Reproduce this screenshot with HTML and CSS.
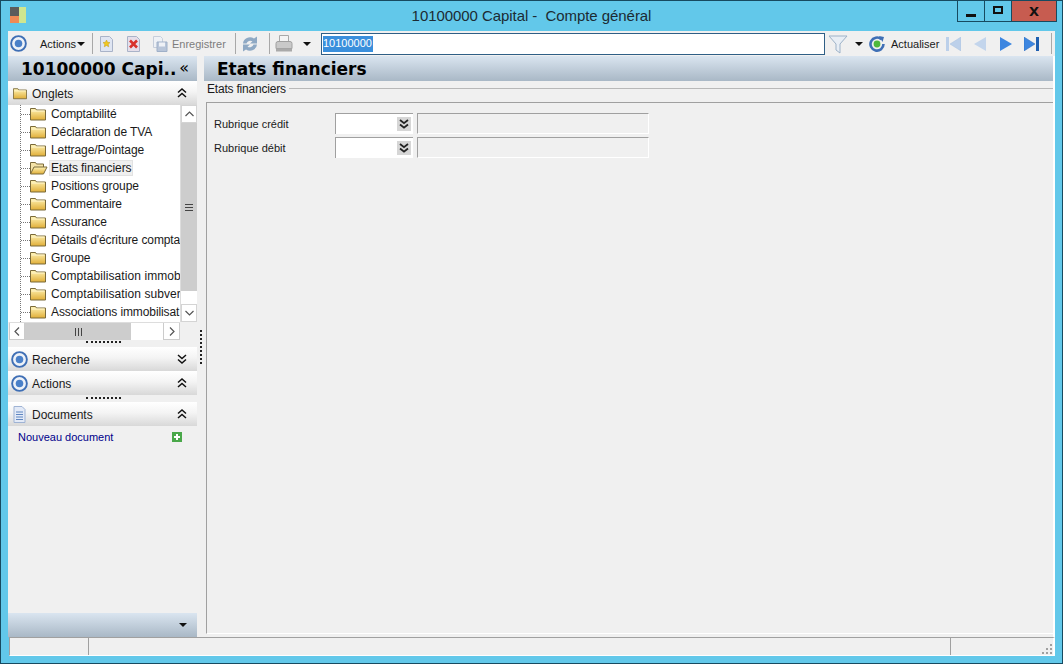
FILE: index.html
```html
<!DOCTYPE html>
<html lang="fr">
<head>
<meta charset="utf-8">
<title>10100000 Capital - Compte général</title>
<link rel="stylesheet" href="styles.css">
</head>
<body>
<svg class="defs" width="0" height="0">
  <defs>
    <linearGradient id="fold" x1="0" y1="0" x2="0" y2="1"><stop offset="0" stop-color="#fff3b4"/><stop offset="1" stop-color="#e0ae38"/></linearGradient>
    <symbol id="target" viewBox="0 0 18 18"><circle cx="9" cy="9" r="7.8" fill="#eef2f8" stroke="#3f6fb5" stroke-width="2"/><circle cx="9" cy="9" r="4" fill="#4a80c8"/></symbol>
    <symbol id="folder" viewBox="0 0 16 14"><path d="M.5 3V1.500h5l1 1.500h9v10H.5z" fill="url(#fold)" stroke="#7a6a3a"/><path d="M1.500 4h13" stroke="#fff6cf"/></symbol>
    <symbol id="folder-open" viewBox="0 0 18 14"><path d="M.5 13V1.500h5l1 1.500h7v3" fill="#f4e3a8" stroke="#7a6a3a"/><path d="M.5 13l3.500-7h13l-3.500 7z" fill="url(#fold)" stroke="#7a6a3a"/></symbol>
    <symbol id="dbl-up" viewBox="0 0 10 10"><path d="M1 4.500l4-3.500 4 3.500M1 9l4-3.500L9 9" fill="none" stroke="#111" stroke-width="1.500"/></symbol>
    <symbol id="dbl-down" viewBox="0 0 10 10"><path d="M1 1l4 3.500L9 1M1 5.500L5 9l4-3.500" fill="none" stroke="#111" stroke-width="1.500"/></symbol>
    <symbol id="dropdown" viewBox="0 0 14 14"><rect width="14" height="14" fill="#d6d6d6"/><path d="M3 3l4 3.200L11 3M3 7.500l4 3.200 4-3.200" fill="none" stroke="#222" stroke-width="1.800"/></symbol>
    <symbol id="arrow-half" viewBox="0 0 16 16"><path d="M1 7.500A7 6.500 0 0 1 12 2.500L15 .5v7H8l2.500-2.200A4 4 0 0 0 4.500 7.500z" fill="#8fa9c4"/></symbol>
  </defs>
</svg>
<div class="window">
  <header class="titlebar">
    <div class="app-logo"><i class="lg-grey"></i><i class="lg-green"></i><i class="lg-orange"></i></div>
    <div class="title">10100000 Capital -&nbsp; Compte général</div>
    <div class="winbtns">
      <div class="winbtn win-min"><span class="min-glyph"></span></div>
      <div class="winbtn win-max"><span class="max-glyph"></span></div>
      <div class="winbtn win-close">X</div>
    </div>
  </header>

  <div class="toolbar">
    <svg class="ic18 t-target"><use href="#target"/></svg>
    <span class="t-actions">Actions</span><span class="caret c-actions"></span>
    <span class="tsep s1"></span>
    <svg class="t-new" width="15" height="16" viewBox="0 0 15 16"><path d="M1.500.5h9l3 3v12h-12z" fill="#dfe5f2" stroke="#a9b3c8"/><path d="M7.500 4l1.100 2.300 2.400.3-1.800 1.700.5 2.500-2.200-1.300-2.200 1.300.5-2.500L4 6.600l2.400-.3z" fill="#f2c81e" stroke="#c29a14" stroke-width=".5"/></svg>
    <svg class="t-del" width="15" height="16" viewBox="0 0 15 16"><path d="M1.500.5h9l3 3v12h-12z" fill="#e6dfea" stroke="#a9b3c8"/><path d="M4 4.500l7 7M11 4.500l-7 7" stroke="#d8322c" stroke-width="2.600"/></svg>
    <svg class="t-save" width="16" height="16" viewBox="0 0 16 16"><path d="M1.500.5h7l2 2v9h-9z" fill="#eef1f6" stroke="#c6cedb"/><path d="M5 6h10v9.500H5z" fill="#b8c5d9" stroke="#9fb0c8"/><path d="M7 6.500h6v4H7z" fill="#eef1f6"/></svg>
    <span class="t-save-label">Enregistrer</span>
    <span class="tsep s2"></span>
    <svg class="t-refresh" width="16" height="16" viewBox="0 0 16 16"><use href="#arrow-half" width="16" height="16"/><use href="#arrow-half" width="16" height="16" transform="rotate(180 8 8)"/></svg>
    <span class="tsep s3"></span>
    <svg class="t-print" width="18" height="18" viewBox="0 0 18 18"><path d="M4.500.5h9v7h-9z" fill="#f4f4f4" stroke="#a8a8a8"/><path d="M1 8.500q0-2 2-2h12q2 0 2 2v5H1z" fill="#c9c9c9" stroke="#a0a0a0"/><path d="M1 13.500h16v3H1z" fill="#a9a9a9"/></svg>
    <span class="caret c-print"></span>
    <div class="t-input"><span class="t-selected">10100000</span></div>
    <svg class="t-filter" width="20" height="20" viewBox="0 0 20 20"><path d="M1 2h18l-7 8v9l-4-3v-6z" fill="#e8eef5" stroke="#9db2c8"/></svg>
    <span class="caret c-filter"></span>
    <svg class="t-update" width="16" height="16" viewBox="0 0 16 16"><path d="M14.500 8a6.500 6.500 0 1 1-2.200-4.800" fill="none" stroke="#3f6fb5" stroke-width="2.600"/><path d="M10 0l5 1-1.500 5z" fill="#3f6fb5"/><circle cx="8" cy="8" r="3.400" fill="#4fb83c"/></svg>
    <span class="t-update-label">Actualiser</span>
    <svg class="t-first" width="15" height="14" viewBox="0 0 15 14"><path d="M0 0h3v14H0z" fill="#bcd0ea"/><path d="M15 0v14L4 7z" fill="#bcd0ea" stroke="#a9c0de" stroke-width=".5"/></svg>
    <svg class="t-prev" width="12" height="14" viewBox="0 0 12 14"><path d="M12 0v14L0 7z" fill="#c3d5ec"/></svg>
    <svg class="t-next" width="12" height="14" viewBox="0 0 12 14"><path d="M0 0v14l12-7z" fill="#3d86e0"/></svg>
    <svg class="t-last" width="15" height="14" viewBox="0 0 15 14"><path d="M0 0v14l11-7z" fill="#3d86e0" stroke="#2a68b8" stroke-width=".5"/><path d="M12 0h3v14h-3z" fill="#1f5fb0"/></svg>
    <span class="tsep s4"></span>
  </div>

  <div class="main">
    <aside class="sidebar">
      <div class="heading side-heading"><span class="heading-text">10100000 Capi..</span><span class="collapse-glyph">«</span></div>

      <div class="panel-head head-onglets">
        <svg class="panel-icon" width="14" height="13"><use href="#folder"/></svg>
        <span class="panel-label">Onglets</span>
        <svg class="chev" width="10" height="10"><use href="#dbl-up"/></svg>
      </div>

      <div class="tree-box">
        <div class="tree-view">
          <ul class="tree">
            <li class="node"><span class="dots"></span><svg class="folder" width="16" height="14"><use href="#folder"/></svg><span class="lbl">Comptabilité</span></li>
            <li class="node"><span class="dots"></span><svg class="folder" width="16" height="14"><use href="#folder"/></svg><span class="lbl">Déclaration de TVA</span></li>
            <li class="node"><span class="dots"></span><svg class="folder" width="16" height="14"><use href="#folder"/></svg><span class="lbl">Lettrage/Pointage</span></li>
            <li class="node"><span class="dots"></span><svg class="folder open" width="18" height="14"><use href="#folder-open"/></svg><span class="lbl sel">Etats financiers</span></li>
            <li class="node"><span class="dots"></span><svg class="folder" width="16" height="14"><use href="#folder"/></svg><span class="lbl">Positions groupe</span></li>
            <li class="node"><span class="dots"></span><svg class="folder" width="16" height="14"><use href="#folder"/></svg><span class="lbl">Commentaire</span></li>
            <li class="node"><span class="dots"></span><svg class="folder" width="16" height="14"><use href="#folder"/></svg><span class="lbl">Assurance</span></li>
            <li class="node"><span class="dots"></span><svg class="folder" width="16" height="14"><use href="#folder"/></svg><span class="lbl">Détails d'écriture compta</span></li>
            <li class="node"><span class="dots"></span><svg class="folder" width="16" height="14"><use href="#folder"/></svg><span class="lbl">Groupe</span></li>
            <li class="node"><span class="dots"></span><svg class="folder" width="16" height="14"><use href="#folder"/></svg><span class="lbl wide">Comptabilisation immob</span></li>
            <li class="node"><span class="dots"></span><svg class="folder" width="16" height="14"><use href="#folder"/></svg><span class="lbl wide">Comptabilisation subver</span></li>
            <li class="node"><span class="dots"></span><svg class="folder" width="16" height="14"><use href="#folder"/></svg><span class="lbl">Associations immobilisat</span></li>
          </ul>
          <div class="vscroll">
            <div class="sb-btn sb-v"><svg width="9" height="6" viewBox="0 0 9 6"><path d="M.5 5l4-4 4 4" fill="none" stroke="#555" stroke-width="1.200"/></svg></div>
            <div class="vthumb"><span class="vgrip"></span></div>
            <div class="vtrack"></div>
            <div class="sb-btn sb-v"><svg width="9" height="6" viewBox="0 0 9 6"><path d="M.5 1l4 4 4-4" fill="none" stroke="#555" stroke-width="1.200"/></svg></div>
          </div>
        </div>
        <div class="hscroll">
          <div class="sb-btn sb-h"><svg width="6" height="9" viewBox="0 0 6 9"><path d="M5 .5l-4 4 4 4" fill="none" stroke="#555" stroke-width="1.200"/></svg></div>
          <div class="hthumb"><span class="hgrip"></span></div>
          <div class="htrack"></div>
          <div class="sb-btn sb-h sb-hend"><svg width="6" height="9" viewBox="0 0 6 9"><path d="M1 .5l4 4-4 4" fill="none" stroke="#555" stroke-width="1.200"/></svg></div>
        </div>
      </div>

      <div class="grip grip-a"></div>
      <div class="panel-head">
        <svg class="ic18" width="17" height="17"><use href="#target"/></svg>
        <span class="panel-label">Recherche</span>
        <svg class="chev" width="10" height="10"><use href="#dbl-down"/></svg>
      </div>
      <div class="panel-head">
        <svg class="ic18" width="17" height="17"><use href="#target"/></svg>
        <span class="panel-label">Actions</span>
        <svg class="chev" width="10" height="10"><use href="#dbl-up"/></svg>
      </div>
      <div class="grip grip-b"></div>
      <div class="panel-head">
        <svg class="ic18" width="16" height="17" viewBox="0 0 16 17"><path d="M2.500.5h8l3 3v13h-11z" fill="#e3eaf7" stroke="#9fb3d4"/><path d="M4.500 6h7M4.500 8.500h7M4.500 11h7M4.500 13.500h7" stroke="#5f86c0"/></svg>
        <span class="panel-label">Documents</span>
        <svg class="chev" width="10" height="10"><use href="#dbl-up"/></svg>
      </div>
      <div class="doc-row">
        <span class="doc-link">Nouveau document</span>
        <svg class="plus" width="10" height="10" viewBox="0 0 10 10"><rect width="10" height="10" fill="#4aa84a"/><path d="M5 2v6M2 5h6" stroke="#fff" stroke-width="2"/></svg>
      </div>
      <div class="side-foot"><span class="caret"></span></div>
    </aside>

    <div class="splitter"><span class="vdots"></span></div>

    <section class="content">
      <div class="heading main-heading"><span class="heading-text">Etats financiers</span></div>
      <div class="legend-row"><span class="legend">Etats financiers</span><span class="legend-line"></span></div>
      <div class="form-box">
        <div class="form-row">
          <span class="form-label">Rubrique crédit</span>
          <div class="combo"><svg width="14" height="14"><use href="#dropdown"/></svg></div>
          <div class="readonly"></div>
        </div>
        <div class="form-row">
          <span class="form-label">Rubrique débit</span>
          <div class="combo"><svg width="14" height="14"><use href="#dropdown"/></svg></div>
          <div class="readonly"></div>
        </div>
      </div>
    </section>
  </div>

  <footer class="statusbar">
    <div class="st st-a"></div>
    <div class="st st-b"></div>
    <div class="st st-c"><svg class="resize" width="12" height="12" viewBox="0 0 12 12"><path d="M9 1h2v2H9zM5 5h2v2H5zM9 5h2v2H9zM1 9h2v2H1zM5 9h2v2H5zM9 9h2v2H9z" fill="#a0a0a0"/></svg></div>
  </footer>
</div>
</body>
</html>
```
FILE: styles.css
```css
* { box-sizing: border-box; }
html, body { margin: 0; padding: 0; height: 100%; overflow: hidden; }
body { font-family: "Liberation Sans", Arial, sans-serif; font-size: 12px; color: #1a1a1a; }
.defs { display: block; height: 0; }
ul { list-style: none; margin: 0; padding: 0; }

.window { width: 1063px; height: 664px; display: flex; flex-direction: column; background: #62c8ea; border: 1px solid #174a60; padding: 0 7px 7px 7px; }

.titlebar { height: 30px; flex: none; display: grid; grid-template-columns: minmax(0, 1fr) auto minmax(0, 1fr); align-items: start; margin: 0 -7px; }
.app-logo { width: 16px; height: 16px; margin: 6px 0 0 9px; display: grid; grid-template-columns: 9px 7px; grid-template-rows: 9px 7px; }
.lg-grey { background: #5c5c5c; }
.lg-green { background: #cfe68f; grid-row: 1 / 3; grid-column: 2; }
.lg-orange { background: #f08a55; }
.title { font-size: 15px; color: #1c2b33; line-height: 30px; white-space: nowrap; letter-spacing: -.06px; }
.winbtns { justify-self: end; display: flex; height: 21px; margin-right: 5px; border: 1px solid #174a60; border-top: 0; }
.winbtn { display: flex; align-items: center; justify-content: center; border-left: 1px solid #174a60; }
.winbtn:first-child { border-left: 0; }
.win-min { width: 26px; }
.win-max { width: 27px; }
.win-close { width: 45px; background: #c75c50; font: bold 13px "DejaVu Sans", sans-serif; color: #111; }
.min-glyph { width: 10px; height: 3px; background: #111; margin-top: 8px; }
.max-glyph { width: 10px; height: 8px; border: 2px solid #111; margin-top: -2px; }

.toolbar { height: 25px; flex: none; display: flex; align-items: center; background: #f0f0f0; font-size: 11px; }
.toolbar svg { flex: none; }
.ic18 { flex: none; width: 17px; height: 17px; }
.t-target { margin-left: 2px; }
.t-actions { margin-left: 13px; width: 36px; white-space: nowrap; }
.caret { display: inline-block; flex: none; width: 0; height: 0; border-left: 4px solid transparent; border-right: 4px solid transparent; border-top: 4px solid #111; }
.c-actions { margin-left: 1px; }
.tsep { width: 1px; height: 21px; background: #a8a8a8; flex: none; }
.s1 { margin-left: 7px; }
.t-new { margin-left: 6px; }
.t-del { margin-left: 12px; }
.t-save { margin-left: 11px; }
.t-save-label { margin-left: 4px; width: 54px; color: #7d7d7d; white-space: nowrap; }
.s2 { margin-left: 9px; }
.t-refresh { margin-left: 6px; }
.s3 { margin-left: 11px; }
.t-print { margin-left: 5px; }
.c-print { margin-left: 10px; }
.t-input { margin-left: 10px; width: 504px; height: 22px; flex: none; background: #fff; border: 1px solid #2f5f86; padding: 2px 1px; line-height: 15px; }
.t-selected { display: inline-block; width: 50px; background: #3a8fdc; color: #fff; height: 16px; }
.t-filter { margin-left: 3px; }
.c-filter { margin-left: 7px; }
.t-update { margin-left: 6px; }
.t-update-label { margin-left: 6px; width: 47px; white-space: nowrap; }
.t-first { margin-left: 8px; }
.t-prev { margin-left: 13px; }
.t-next { margin-left: 14px; }
.t-last { margin-left: 12px; }
.s4 { margin-left: 12px; }

.main { flex: 1; min-height: 0; display: flex; background: #f0f0f0; }
.sidebar { width: 189px; flex: none; display: flex; flex-direction: column; }
.splitter { width: 7px; flex: none; }
.vdots { display: block; width: 0; height: 34px; margin: 274px 0 0 3px; border-left: 2px dotted #222; }
.content { flex: 1; min-width: 0; display: flex; flex-direction: column; padding-bottom: 3px; border-right: 2px solid #fff; }

.heading { height: 25px; flex: none; display: flex; align-items: center; background: linear-gradient(#dae5f0, #a9b8c6); font: bold 17px "DejaVu Sans", Verdana, sans-serif; color: #000; white-space: nowrap; }
.side-heading { padding-left: 13px; justify-content: space-between; }
.main-heading { padding-left: 13px; }
.collapse-glyph { font: normal 16px "DejaVu Sans", sans-serif; margin: -3px 8px 0 0; }

.panel-head { height: 24px; flex: none; display: flex; align-items: center; padding: 0 10px 0 3px; background: linear-gradient(#fff, #f4f4f4 45%, #d8d8d8); font-size: 12px; }
.panel-icon { margin-left: 2px; flex: none; }
.panel-label { flex: 1; margin: 1px 0 0 4px; }
.chev { flex: none; }
.head-onglets .panel-label { margin-left: 5px; }

.tree-box { height: 235px; flex: none; display: flex; flex-direction: column; }
.tree-view { height: 217px; flex: none; display: flex; background: #fff; }
.tree { flex: 1; min-width: 0; overflow: hidden; margin-left: 12px; border-left: 1px dotted #777; }
.node { height: 18px; display: flex; align-items: center; white-space: nowrap; overflow: hidden; }
.dots { width: 9px; flex: none; border-top: 1px dotted #777; }
.folder { flex: none; }
.folder.open { margin-right: -2px; }
.lbl { margin-left: 3px; padding: 1px 2px; font-size: 12px; letter-spacing: -.1px; }
.lbl.wide { letter-spacing: .08px; }
.lbl.sel { background: #efefef; border: 1px solid #e2e2e2; padding: 0 1px; }

.vscroll { width: 17px; flex: none; display: flex; flex-direction: column; background: #fff; border-left: 1px solid #ddd; }
.sb-btn { display: flex; align-items: center; justify-content: center; background: #fff; flex: none; }
.sb-v { height: 18px; width: 16px; border: 1px solid #d4d4d4; }
.vthumb { height: 168px; background: #cdcdcd; display: flex; align-items: center; justify-content: center; }
.vgrip { width: 8px; height: 7px; border-top: 1px solid #444; border-bottom: 1px solid #444; background: linear-gradient(#444,#444) center/100% 1px no-repeat; }
.vtrack { flex: 1; }

.hscroll { height: 18px; flex: none; display: flex; margin: 0 17px 0 1px; background: #fff; border-top: 1px solid #ddd; }
.sb-h { width: 16px; border: 1px solid #ccc; border-top: 0; }
.sb-hend { width: 17px; }
.hthumb { width: 106px; background: #cdcdcd; display: flex; align-items: center; justify-content: center; }
.hgrip { width: 7px; height: 8px; border-left: 1px solid #444; border-right: 1px solid #444; background: linear-gradient(#444,#444) center/1px 100% no-repeat; }
.htrack { flex: 1; }

.grip { flex: none; height: 2px; width: 35px; margin-left: 78px; border-top: 2px dotted #222; }
.grip-a { margin-top: 1px; margin-bottom: 4px; }
.grip-b { margin-top: 2px; margin-bottom: 3px; }

.doc-row { display: flex; align-items: center; justify-content: space-between; padding: 5px 15px 0 10px; }
.doc-link { color: #00008b; font-size: 11px; }
.plus { flex: none; }
.side-foot { margin-top: auto; height: 24px; flex: none; display: flex; align-items: center; justify-content: flex-end; padding-right: 10px; background: linear-gradient(#dae5f0, #a9b8c6); }

.legend-row { height: 21px; flex: none; display: flex; align-items: center; padding-left: 3px; }
.legend { font-size: 12px; white-space: nowrap; margin-top: -5px; letter-spacing: -.2px; }
.legend-line { flex: 1; height: 1px; margin: -7px 0 0 3px; background: #b8b8b8; }
.form-box { flex: 1; margin-left: 2px; border-top: 1px solid #a0a0a0; border-left: 1px solid #a0a0a0; border-bottom: 1px solid #fff; padding-top: 10px; }
.form-row { display: flex; align-items: center; height: 21px; margin-bottom: 3px; }
.form-label { width: 128px; padding-left: 7px; font-size: 11px; white-space: nowrap; }
.combo { width: 78px; height: 21px; background: #fff; border-top: 1px solid #a0a0a0; border-left: 1px solid #a0a0a0; display: flex; align-items: center; justify-content: flex-end; padding-right: 2px; }
.readonly { width: 232px; height: 21px; margin-left: 4px; background: #f0f0f0; border-top: 1px solid #a0a0a0; border-left: 1px solid #a0a0a0; border-right: 1px solid #fff; border-bottom: 1px solid #fff; }

.statusbar { height: 19px; flex: none; display: flex; background: #f0f0f0; border-top: 1px solid #a0a0a0; border-left: 1px solid #a0a0a0; border-right: 2px solid #fff; border-bottom: 1px solid #fff; margin-left: 1px; }
.st { height: 100%; }
.st-a { width: 79px; border-right: 1px solid #a0a0a0; }
.st-b { flex: 1; border-right: 1px solid #a0a0a0; }
.st-c { width: 102px; display: flex; justify-content: flex-end; align-items: flex-end; }
```
